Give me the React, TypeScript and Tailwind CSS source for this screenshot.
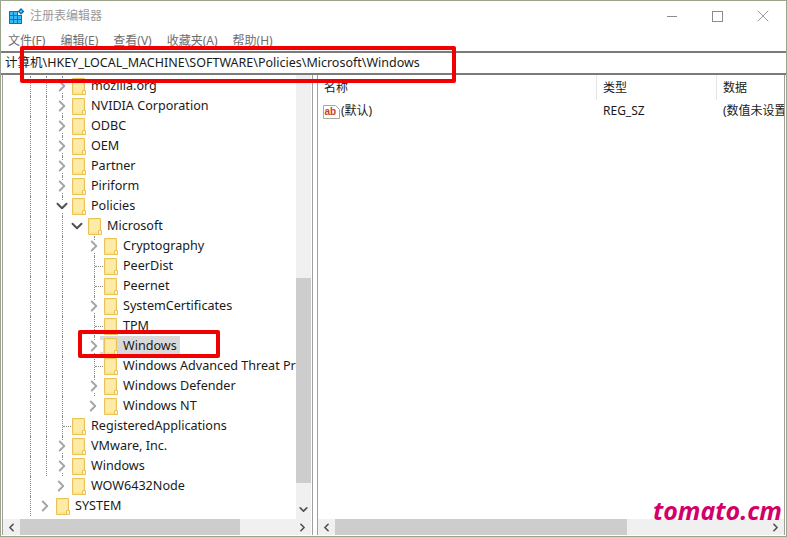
import React from 'react';
import { ChevronDown, ChevronLeft, ChevronRight, X } from 'lucide-react';

const UI_FONT = 'font-["Noto_Sans","Noto_Sans_CJK_SC",sans-serif]';

type TreeRow = { label: string; depth: number; open?: boolean; leaf?: boolean; selected?: boolean; last?: boolean };

const ROWS: TreeRow[] = [
  { label: 'mozilla.org', depth: 2 },
  { label: 'NVIDIA Corporation', depth: 2 },
  { label: 'ODBC', depth: 2 },
  { label: 'OEM', depth: 2 },
  { label: 'Partner', depth: 2 },
  { label: 'Piriform', depth: 2 },
  { label: 'Policies', depth: 2, open: true },
  { label: 'Microsoft', depth: 3, open: true, last: true },
  { label: 'Cryptography', depth: 4 },
  { label: 'PeerDist', depth: 4, leaf: true },
  { label: 'Peernet', depth: 4, leaf: true },
  { label: 'SystemCertificates', depth: 4 },
  { label: 'TPM', depth: 4, leaf: true },
  { label: 'Windows', depth: 4, selected: true },
  { label: 'Windows Advanced Threat Protection', depth: 4, leaf: true },
  { label: 'Windows Defender', depth: 4 },
  { label: 'Windows NT', depth: 4, last: true },
  { label: 'RegisteredApplications', depth: 2, leaf: true },
  { label: 'VMware, Inc.', depth: 2 },
  { label: 'Windows', depth: 2 },
  { label: 'WOW6432Node', depth: 2, last: true },
  { label: 'SYSTEM', depth: 1, last: true },
];

const Folder = () => (
  <svg width="14" height="17" viewBox="0 0 14 17" className="shrink-0">
    <path d="M.5.5h12v13h1v3H.5z" fill="#fde48f" stroke="#ebc355" />
    <path d="M2 2h9v12H2z" fill="#fdeba8" />
    <path d="M10.5 12.5h3v4h-3z" fill="#fff3c4" stroke="#ebc355" />
  </svg>
);

const Guide = ({ on }: { on: boolean }) => (
  <div className={on ? 'h-5 w-4 shrink-0 border-l border-dotted border-[#8a8a8a]' : 'h-5 w-4 shrink-0'} />
);

const Row = ({ row }: { row: TreeRow }) => (
  <div className="flex h-5 items-center whitespace-nowrap pl-[27px]">
    <Guide on />
    {row.depth > 1 && <Guide on={!row.last || row.depth > 2} />}
    {row.depth > 2 && <Guide on />}
    {row.depth > 3 && <Guide on={false} />}
    <div className={row.last && !row.leaf ? 'relative h-5 w-[6px] shrink-0' : 'relative h-5 w-[6px] shrink-0 border-l border-dotted border-[#8a8a8a]'}>
      {row.leaf ? (
        <div className="mt-[10px] h-0 w-2 border-t border-dotted border-[#8a8a8a]" />
      ) : (
        <div className="absolute -left-[10px] top-[4px] flex h-3 w-[18px] items-center justify-center bg-white">
          {row.open ? (
            <ChevronDown size={18} strokeWidth={2.6} className="shrink-0 text-[#505050]" />
          ) : (
            <ChevronRight size={18} strokeWidth={2.6} className="shrink-0 text-[#a6a6a6]" />
          )}
        </div>
      )}
    </div>
    <div className={row.selected ? 'flex h-5 w-[80px] shrink-0 items-center bg-[#d9d9d9] pl-1' : 'flex h-5 items-center pl-1'}>
      <Folder />
      <span className="ml-[5px] text-[12.6px] text-[#1a1a1a]">{row.label}</span>
    </div>
  </div>
);

const HScroll = ({ thumb }: { thumb: string }) => (
  <div className="flex h-[16px] shrink-0 items-center bg-[#f0f0f0]">
    <div className="flex w-[17px] shrink-0 justify-center"><ChevronLeft size={13} strokeWidth={3} className="text-[#505050]" /></div>
    <div className="h-full min-w-0 flex-1">
      <div className={thumb + ' h-full bg-[#cdcdcd]'} />
    </div>
    <div className="flex w-[17px] shrink-0 justify-center"><ChevronRight size={13} strokeWidth={3} className="text-[#505050]" /></div>
  </div>
);

export default function App() {
  return (
    <div className={UI_FONT + ' relative flex h-[537px] w-[787px] flex-col overflow-hidden border border-[#9aa58c] bg-white'}>
      {/* title bar */}
      <div className="flex h-[30px] shrink-0 items-center pl-2">
        <svg width="16" height="16" viewBox="0 0 16 16" className="shrink-0">
          <path d="M0 3h9v4h4v9H0z" fill="#0f72b8" />
          <path d="M1 4h3v3H1zM5 4h3v3H5zM1 8h3v3H1zM5 8h3v3H5zM9 8h3v3H9zM1 12h3v3H1zM5 12h3v3H5zM9 12h3v3H9z" fill="#36baf5" />
          <path d="M12 0l3.4 3.4L12 6.8 8.6 3.4z" fill="#0f72b8" />
          <path d="M12 2l1.4 1.4L12 4.8l-1.4-1.4z" fill="#5cc8f5" />
        </svg>
        <span className="ml-[5px] text-[12px] text-[#9a9a9a]">注册表编辑器</span>
        <div className="ml-auto flex items-center pr-[13px]">
          <div className="mr-[35px] h-px w-[10px] bg-[#8c8c8c]" />
          <div className="mr-[30px] h-[11px] w-[11px] border border-[#8c8c8c]" />
          <X size={20} strokeWidth={1} className="text-[#8c8c8c]" />
        </div>
      </div>
      {/* menu */}
      <div className="flex h-5 shrink-0 items-center gap-[15px] pl-[7px] text-[12px] text-[#6e6e6e]">
        <span>文件(F)</span>
        <span>编辑(E)</span>
        <span>查看(V)</span>
        <span>收藏夹(A)</span>
        <span>帮助(H)</span>
      </div>
      {/* address bar */}
      <div className="flex h-6 shrink-0 items-center border-y-2 border-[#7b7b7b] pl-1 text-[12.5px] whitespace-nowrap text-[#1a1a1a]">
        计算机\HKEY_LOCAL_MACHINE\SOFTWARE\Policies\Microsoft\Windows
      </div>
      {/* panes */}
      <div className="flex min-h-0 flex-1 pb-px pl-px pr-px">
        <div className="flex w-[311px] shrink-0 flex-col border-x border-[#a0a0a0] pr-px">
          <div className="flex min-h-0 flex-1">
            <div className="min-w-0 flex-1 overflow-hidden pt-px">
              {ROWS.map((r, i) => <Row key={i} row={r} />)}
            </div>
            <div className="flex w-[15px] shrink-0 flex-col items-center bg-[#f0f0f0]">
              <div className="h-[203px]" />
              <div className="h-[205px] w-full bg-[#cdcdcd]" />
              <div className="flex-1" />
              <ChevronDown size={13} strokeWidth={3} className="mb-[3px] text-[#505050]" />
            </div>
          </div>
          <HScroll thumb="w-[220px]" />
        </div>
        <div className="w-1 shrink-0" />
        <div className="flex min-w-0 flex-1 flex-col border-x border-[#a0a0a0]">
          <div className="flex min-h-0 flex-1 flex-col overflow-hidden">
            <div className="flex h-[25px] shrink-0 items-center text-[12px] text-[#1a1a1a]">
              <div className="h-full w-[279px] shrink-0 border-r border-[#e5e5e5] pl-[6px] pt-1">名称</div>
              <div className="h-full w-[120px] shrink-0 border-r border-[#e5e5e5] pl-[6px] pt-1">类型</div>
              <div className="h-full flex-1 pl-[6px] pt-1">数据</div>
            </div>
            <div className="flex h-5 shrink-0 items-center whitespace-nowrap pt-[2px] text-[12px] text-[#1a1a1a]">
              <div className="flex w-[279px] shrink-0 items-center pl-[5px]">
                <svg width="17" height="15" viewBox="0 0 17 15" className="shrink-0">
                  <path d="M.5 1.5h12l4 4v9H.5z" fill="#fff" stroke="#a8a8a8" />
                  <text x="1.5" y="11" fontSize="10" fontWeight="700" fill="#c8401f" fontFamily="Liberation Sans">ab</text>
                </svg>
                <span className="ml-[1px]">(默认)</span>
              </div>
              <div className="w-[120px] shrink-0 pl-[6px]">REG_SZ</div>
              <div className="pl-[6px]">(数值未设置)</div>
            </div>
          </div>
          <HScroll thumb="w-[292px]" />
        </div>
      </div>

      {/* annotations drawn over the screenshot */}
      <div className="absolute left-[19px] top-[45px] h-[37px] w-[436px] rounded-[2px] border-[4px] border-[#f00000]" />
      <div className="absolute left-[77px] top-[329px] h-[28px] w-[142px] rounded-[2px] border-[4px] border-[#f00000]" />
      <div className="absolute right-[4px] top-[497px] font-['Open_Sans',sans-serif] text-[25px] font-bold italic leading-none text-[#d4006a]">tomato.cm</div>
    </div>
  );
}
